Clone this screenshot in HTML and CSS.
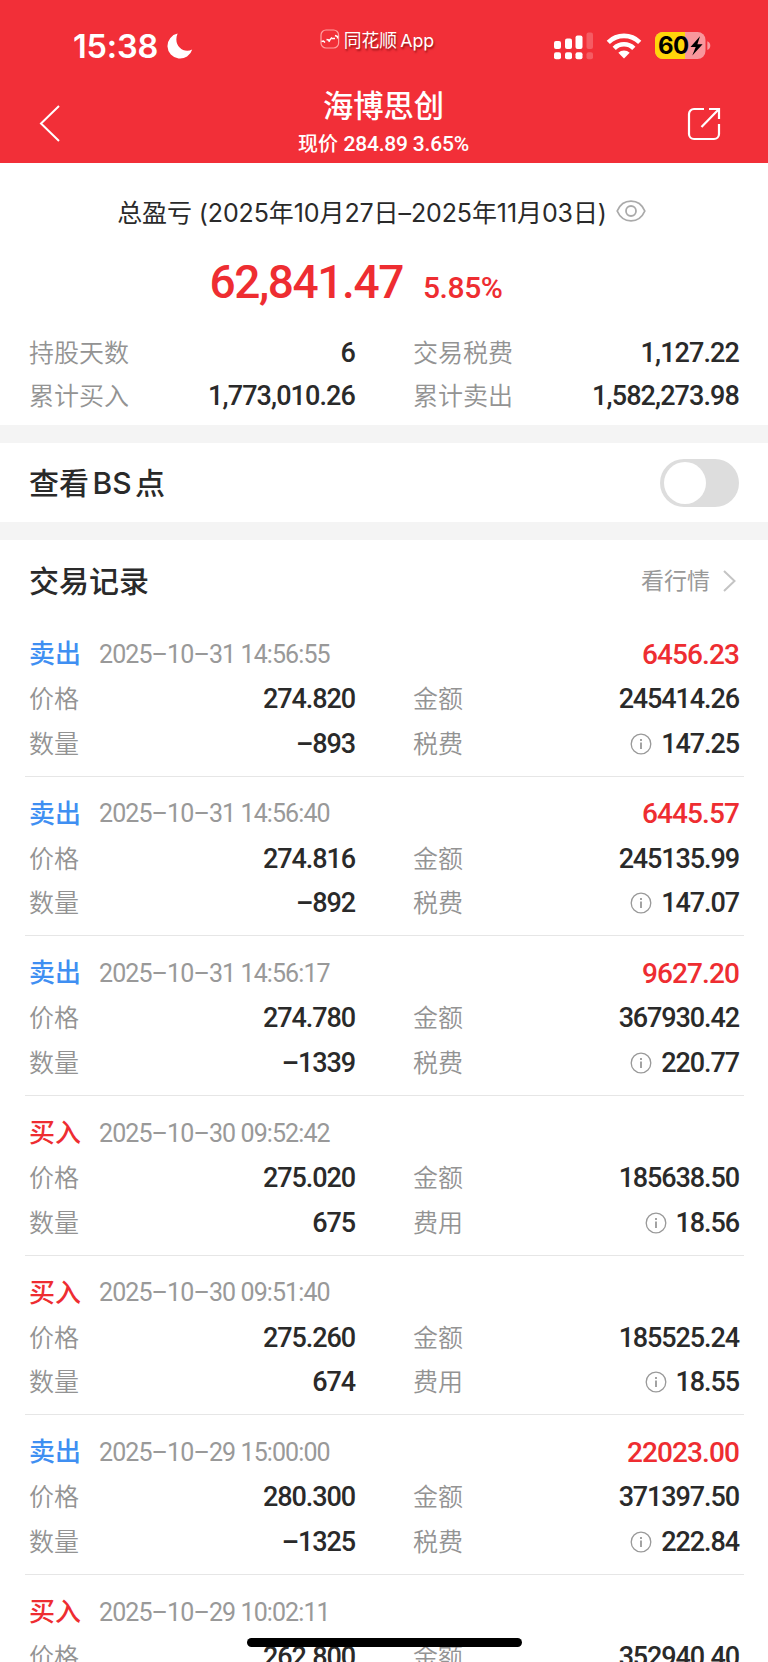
FILE: index.html
```html
<!DOCTYPE html>
<html lang="zh-CN">
<head>
    <meta charset="UTF-8">
    <meta name="viewport" content="width=device-width, initial-scale=1.0">
    <title>海博思创</title>
    <link rel="stylesheet" href="styles.css">
</head>
<body>
    <header class="header">
        <div class="status-bar">
            <div class="clock">
                <span>15:38</span>
                <svg width="26" height="26" viewBox="0 0 26 26"><path d="M10.600 0.600A12.600 12.600 0 1 0 25.200 16.400C17 21 5.500 13 10.600 0.600Z" fill="#fff"/></svg>
            </div>
            <div class="watermark">
                <svg width="20" height="20" viewBox="0 0 20 20" fill="none" stroke="#fff">
                    <rect x="1" y="1" width="17.600" height="18" rx="5" stroke="#ffa0a0" stroke-width="1.200"/>
                    <path d="M1.500 12.500l2-.5 1.500 1.500M6.500 10.500l2 .5 1 2M9 12l3-3.500M12 9.500h3M15 6.500l2.500 1v2" stroke-width="1.500"/>
                </svg>
                <span class="watermark-text">同花顺 App</span>
            </div>
            <div class="status-icons">
                <svg class="signal" width="40" height="28" viewBox="0 0 40 28" fill="#fff">
                    <rect x="0" y="9" width="7" height="8" rx="2"/>
                    <rect x="11" y="6.500" width="7" height="10.500" rx="2"/>
                    <rect x="21.500" y="3.500" width="7" height="13.500" rx="2"/>
                    <rect x="32.500" y="0.500" width="6.500" height="16.500" rx="2" opacity=".22"/>
                    <rect x="0" y="20.300" width="7" height="7" rx="2"/>
                    <rect x="11" y="20.300" width="7" height="7" rx="2"/>
                    <rect x="21.500" y="20.300" width="7" height="7" rx="2"/>
                    <rect x="32.500" y="20.300" width="6.500" height="7" rx="2" opacity=".22"/>
                </svg>
                <svg class="wifi" width="36" height="28" viewBox="0 0 36 28">
                    <g fill="none" stroke="#fff" stroke-width="4.600">
                        <path d="M2.300 10.300a22.500 22.500 0 0 1 31.400 0"/>
                        <path d="M8.200 16.300a14 14 0 0 1 19.600 0"/>
                    </g>
                    <path d="M12.300 20.800a8.300 8.300 0 0 1 11.400 0L18 26.500Z" fill="#fff"/>
                </svg>
                <svg class="battery" width="56" height="28" viewBox="0 0 56 28">
                    <rect x="0" y="0" width="50.500" height="27" rx="8" fill="#fff" opacity=".5"/>
                    <path d="M8 0H30V27H8a8 8 0 0 1-8-8V8a8 8 0 0 1 8-8Z" fill="#ffd60a"/>
                    <path d="M52.300 9.300c4 1.500 4 7.200 0 8.700Z" fill="#fff" opacity=".5"/>
                    <text x="3" y="22" class="battery-text">60</text>
                    <path d="M45 4.300L35.500 15h5.200L37.300 23.500 47.600 12.300h-5.200Z"/>
                </svg>
            </div>
        </div>
        <div class="nav-bar">
            <svg class="back" width="22" height="38" viewBox="0 0 22 38" fill="none" stroke="#fff" stroke-width="2"><path d="M20 2L2 19.500 20 37"/></svg>
            <div class="nav-title">
                <h1>海博思创</h1>
                <p>现价 <span class="num">284.89 3.65%</span></p>
            </div>
            <svg class="share" width="34" height="34" viewBox="0 0 34 34" fill="none" stroke="#fff" stroke-width="2.200">
                <path d="M17 2H7A5 5 0 0 0 2 7V27a5 5 0 0 0 5 5H27a5 5 0 0 0 5-5V17"/>
                <path d="M22 2h10v10M32 2L14.500 20"/>
            </svg>
        </div>
    </header>

    <section class="summary">
        <div class="period">
            <span>总盈亏 (2025年10月27日–2025年11月03日)</span>
            <svg width="30" height="22" viewBox="0 0 30 22" fill="none" stroke="#aaa" stroke-width="1.800">
                <path d="M1.200 11C4 4.500 9 1.200 15 1.200S26 4.500 28.800 11C26 17.500 21 20.800 15 20.800S4 17.500 1.200 11Z"/>
                <circle cx="15" cy="11" r="5"/>
            </svg>
        </div>
        <div class="total num">
            <span class="total-amount">62,841.47</span>
            <span class="total-rate">5.85%</span>
        </div>
        <div class="row">
            <div class="cell"><label>持股天数</label><b class="num">6</b></div>
            <div class="cell"><label>交易税费</label><b class="num">1,127.22</b></div>
        </div>
        <div class="row">
            <div class="cell"><label>累计买入</label><b class="num">1,773,010.26</b></div>
            <div class="cell"><label>累计卖出</label><b class="num">1,582,273.98</b></div>
        </div>
    </section>

    <section class="bs-switch">
        <h2>查看 BS 点</h2>
        <div class="toggle"><i></i></div>
    </section>

    <section class="records">
        <div class="records-head">
            <h2>交易记录</h2>
            <a class="more"><span>看行情</span>
                <svg width="13" height="22" viewBox="0 0 13 22" fill="none" stroke="#c4c4c4" stroke-width="2"><path d="M1 1l10.500 10L1 21"/></svg>
            </a>
        </div>
        <div id="recordList"></div>
    </section>

    <div class="home-indicator"></div>

    <script>
        const records = [
            { type: 'sell', time: '2025–10–31 14:56:55', profit: '6456.23', price: '274.820', amount: '245414.26', qty: '–893', fee: '147.25' },
            { type: 'sell', time: '2025–10–31 14:56:40', profit: '6445.57', price: '274.816', amount: '245135.99', qty: '–892', fee: '147.07' },
            { type: 'sell', time: '2025–10–31 14:56:17', profit: '9627.20', price: '274.780', amount: '367930.42', qty: '–1339', fee: '220.77' },
            { type: 'buy', time: '2025–10–30 09:52:42', profit: '', price: '275.020', amount: '185638.50', qty: '675', fee: '18.56' },
            { type: 'buy', time: '2025–10–30 09:51:40', profit: '', price: '275.260', amount: '185525.24', qty: '674', fee: '18.55' },
            { type: 'sell', time: '2025–10–29 15:00:00', profit: '22023.00', price: '280.300', amount: '371397.50', qty: '–1325', fee: '222.84' },
            { type: 'buy', time: '2025–10–29 10:02:11', profit: '', price: '262.800', amount: '352940.40' }
        ];

        const infoIcon = `<svg class="info" width="22" height="22" viewBox="0 0 22 22" fill="none" stroke="#999" stroke-width="1.300"><circle cx="11" cy="11" r="9.800"/><path d="M11 9.500v6.500M11 6v2" stroke-width="1.800"/></svg>`;

        document.getElementById('recordList').innerHTML = records.map(r => `
            <div class="record">
                <div class="record-head">
                    <span class="side ${r.type}">${r.type === 'sell' ? '卖出' : '买入'}</span>
                    <span class="time num">${r.time}</span>
                    <span class="profit num">${r.profit}</span>
                </div>
                <div class="row price-row">
                    <div class="cell"><label>价格</label><b class="num">${r.price}</b></div>
                    <div class="cell"><label>金额</label><b class="num">${r.amount}</b></div>
                </div>
                ${r.qty ? `<div class="row">
                    <div class="cell"><label>数量</label><b class="num">${r.qty}</b></div>
                    <div class="cell"><label>${r.type === 'sell' ? '税费' : '费用'}</label>${infoIcon}<b class="num">${r.fee}</b></div>
                </div>` : ''}
            </div>
        `).join('');
    </script>
</body>
</html>
```
FILE: styles.css
```css
* {
    box-sizing: border-box;
    margin: 0;
    padding: 0;
}

body {
    width: 768px;
    height: 1662px;
    overflow: hidden;
    background-color: #fff;
    color: #2a2a2a;
    font-family: Inter, "Noto Sans CJK SC", sans-serif;
    font-size: 25px;
}

svg {
    display: block;
    flex: none;
}

.num {
    font-family: Roboto, "Noto Sans CJK SC", sans-serif;
}

/* header */
.header {
    height: 163px;
    background-color: #f22f38;
    color: #fff;
}

.status-bar {
    height: 84px;
    display: flex;
    justify-content: space-between;
    padding: 0 57px 0 73px;
}

.clock {
    width: 210px;
    height: 92px;
    display: flex;
    align-items: center;
    gap: 9px;
    font-size: 32.5px;
    font-weight: 600;
    letter-spacing: -0.2px;
}

.watermark {
    height: 78px;
    margin-right: 30px;
    display: flex;
    align-items: center;
    gap: 4px;
    font-size: 17.8px;
    text-shadow: 1px 2px 2px rgba(90, 0, 0, 0.6);
    white-space: nowrap;
}

.watermark-text {
    word-spacing: -2px;
}

.status-icons {
    width: 210px;
    height: 92px;
    display: flex;
    align-items: center;
    justify-content: flex-end;
}

.wifi {
    margin: 0 13px 0 12px;
}

.battery-text {
    font-size: 24px;
    font-weight: 700;
    letter-spacing: -0.5px;
}

.nav-bar {
    display: flex;
    justify-content: space-between;
    align-items: flex-start;
    padding: 0 47px 0 39px;
}

.back {
    margin: 20px 12px 0 0;
}

.share {
    margin-top: 23px;
}

.nav-title {
    padding-left: 7px;
    text-align: center;
}

.nav-title h1 {
    font-size: 30.3px;
    font-weight: 500;
    line-height: 44px;
}

.nav-title p {
    font-size: 20px;
    font-weight: 500;
    line-height: 32px;
}

.nav-title .num {
    font-size: 21px;
    letter-spacing: -0.2px;
}

/* summary */
.summary {
    height: 262px;
    padding: 28px 29px 0;
}

.period {
    height: 40px;
    display: flex;
    align-items: center;
    justify-content: center;
    gap: 9px;
    padding-right: 5px;
    letter-spacing: -0.1px;
    white-space: nowrap;
}

.total {
    display: flex;
    align-items: baseline;
    justify-content: center;
    gap: 20px;
    height: 100px;
    padding-right: 56px;
    line-height: 103px;
    color: #ee2d31;
    font-weight: 500;
}

.total-amount {
    font-size: 46px;
    letter-spacing: -1.4px;
}

.total-rate {
    font-size: 30px;
    letter-spacing: -0.4px;
}

.row {
    display: flex;
    gap: 58px;
    height: 43px;
}

.cell {
    flex: 1;
    display: flex;
    align-items: center;
}

.cell label {
    flex: 1;
    margin-top: -4px;
    color: #939393;
    font-weight: 350;
}

.cell b {
    font-size: 27px;
    font-weight: 500;
    letter-spacing: -0.9px;
}

.info {
    margin-right: 9px;
}

/* BS toggle */
.bs-switch {
    height: 115px;
    border: solid #f4f4f4;
    border-width: 18px 0;
    padding: 0 29px;
    display: flex;
    align-items: center;
    justify-content: space-between;
}

h2 {
    margin-top: -4px;
    font-size: 30px;
    font-weight: 500;
    word-spacing: -4.5px;
}

.toggle {
    width: 79px;
    height: 48px;
    padding: 3px 4px;
    border-radius: 24px;
    background-color: #ddd;
}

.toggle i {
    display: block;
    width: 42px;
    height: 42px;
    border-radius: 50%;
    background-color: #fff;
}

/* trade records */
.records {
    padding: 0 24px 0 25px;
}

.records-head {
    height: 77px;
    padding: 4px 5px 0 4px;
    display: flex;
    align-items: center;
    justify-content: space-between;
}

.more {
    display: flex;
    align-items: center;
    gap: 13px;
    padding-right: 3px;
    color: #999;
    font-size: 23px;
}

.more span {
    margin-top: -4px;
}

.record {
    height: 159.7px;
    padding: 15px 5px 0 4px;
    border-bottom: 1px solid #e6e6e6;
}

.record-head {
    height: 44px;
    display: flex;
    align-items: center;
}

.side {
    width: 70px;
    margin-top: -5px;
    font-size: 26px;
    font-weight: 500;
}

.sell {
    color: #3f8ff2;
}

.buy {
    color: #ee2d31;
}

.time {
    flex: 1;
    color: #999;
    letter-spacing: -0.9px;
}

.profit {
    color: #ee2d31;
    font-size: 28px;
    font-weight: 500;
    letter-spacing: -0.9px;
}

.record .cell b {
    letter-spacing: -1.1px;
}

.price-row {
    height: 46px;
}

.home-indicator {
    position: fixed;
    left: 247px;
    top: 1638px;
    width: 275px;
    height: 9px;
    border-radius: 5px;
    background-color: #000;
}
```
